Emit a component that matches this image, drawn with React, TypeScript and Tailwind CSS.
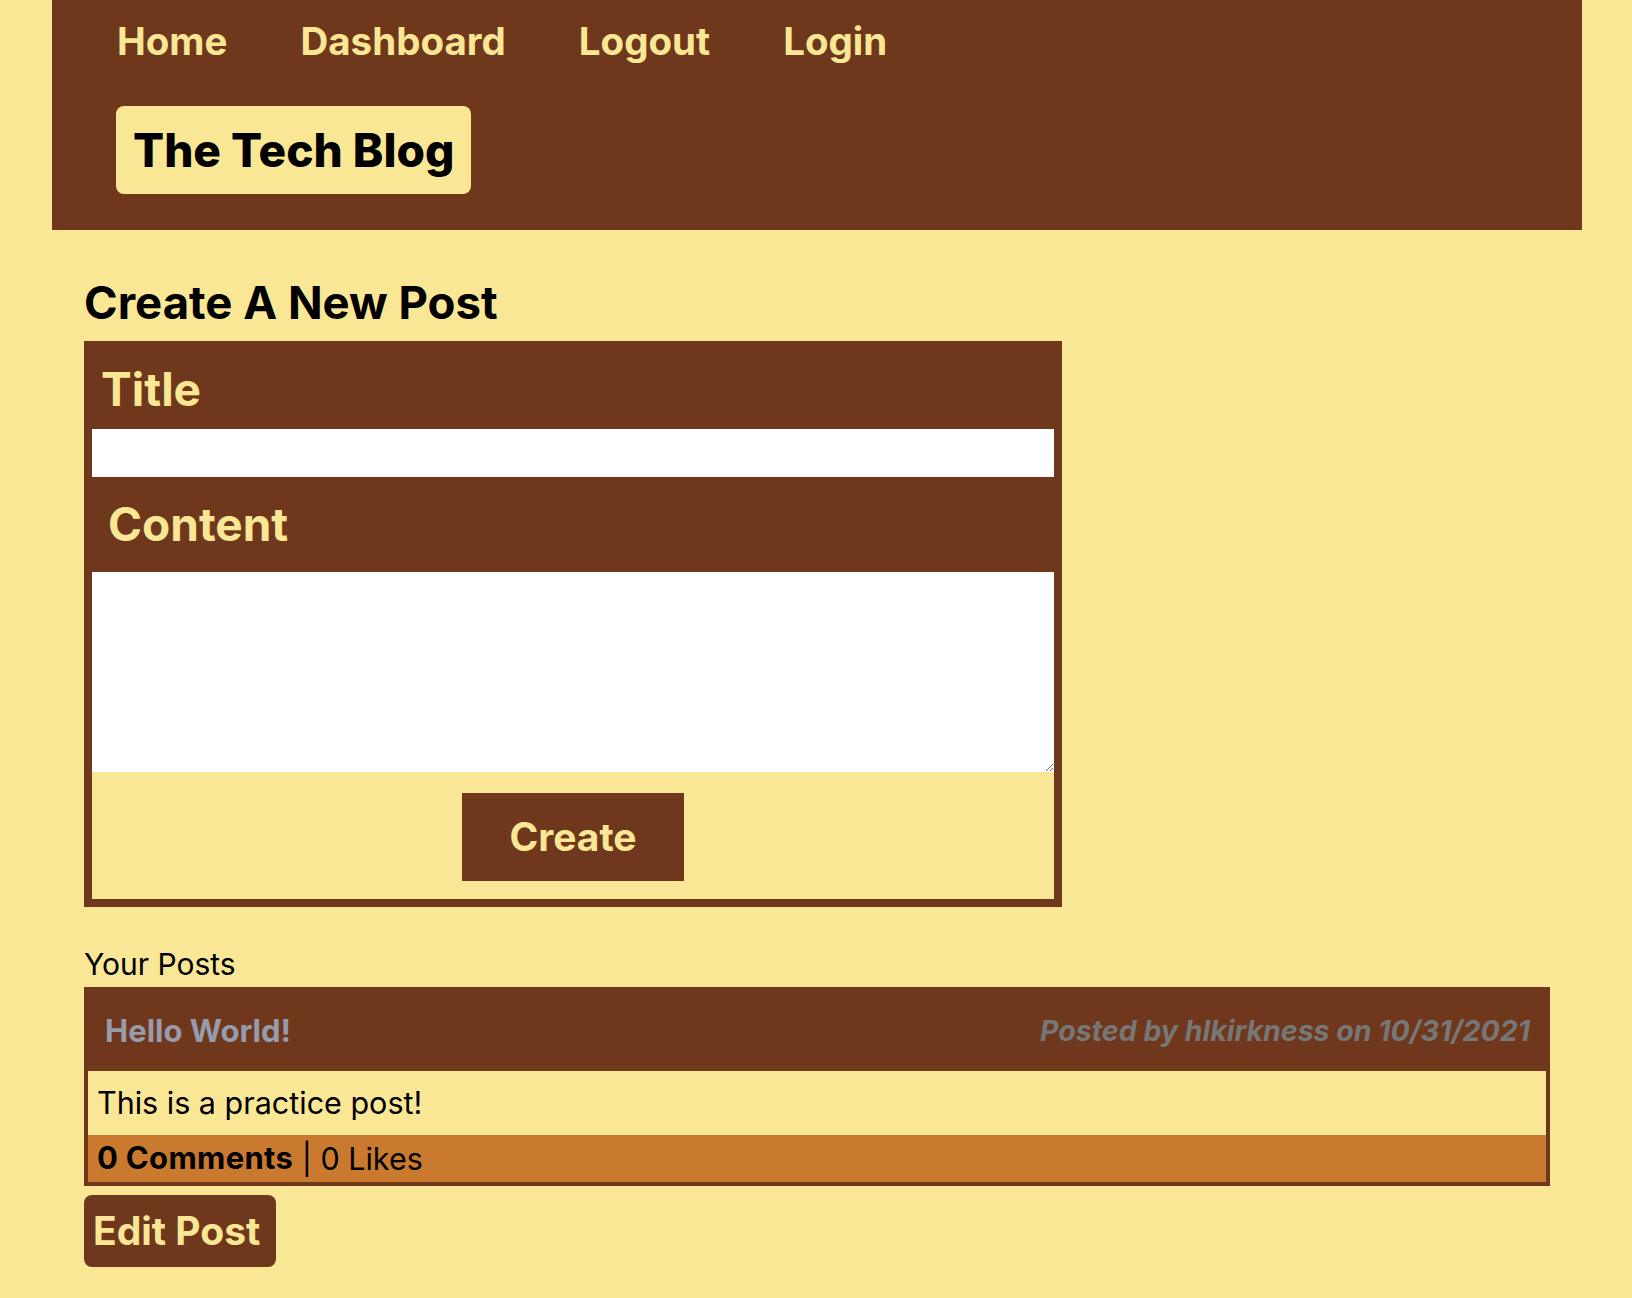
import React from "react";

const font = { fontFamily: "Inter, 'Noto Sans', sans-serif" };

export default function App() {
  return (
    <div className="min-h-[1298px] bg-[#f9e795] text-black" style={font}>
      <header className="ml-[52px] mr-[50px] bg-[#6f381c] pb-[36px]">
        <nav className="flex h-[84px] items-center gap-[73px] pl-[65px]">
          {["Home", "Dashboard", "Logout", "Login"].map((t) => (
            <a key={t} className="text-[38.5px] font-bold text-[#f9e795]">
              {t}
            </a>
          ))}
        </nav>
        <div className="ml-[64px] mt-[22px] inline-flex h-[88px] items-center rounded-lg bg-[#f9e795] pl-[17px] pr-[17px]">
          <h1 className="text-[46px] font-extrabold text-black">The Tech Blog</h1>
        </div>
      </header>

      <main className="pl-[84px] pr-[82px]">
        <h2 className="mt-[46px] mb-[11px] text-[45.5px] font-bold leading-[54px]">
          Create A New Post
        </h2>
        <form className="flex w-[978px] flex-col border-8 border-[#6f381c] bg-[#f9e795]">
          <label className="flex h-[80px] items-center bg-[#6f381c] pl-[9px] text-[46px] font-bold text-[#f9e795]">
            Title
          </label>
          <input className="h-[48px] w-full bg-white outline-none" />
          <label className="flex h-[95px] items-center bg-[#6f381c] pl-[16px] text-[46px] font-bold text-[#f9e795]">
            Content
          </label>
          <textarea className="block h-[200px] w-full bg-white outline-none" />
          <div className="flex justify-center pt-[21px] pb-[18px]">
            <button
              type="button"
              className="flex h-[88px] w-[222px] items-center justify-center bg-[#6f381c] text-[39px] font-bold text-[#f9e795]"
            >
              Create
            </button>
          </div>
        </form>

        <p className="mt-[39px] mb-[5px] text-[30px] leading-[36px]">Your Posts</p>
        <div className="border-4 border-[#6f381c]">
          <div className="flex h-[80px] items-center justify-between bg-[#6f381c] pl-[17px] pr-[16px]">
            <span className="text-[31px] font-bold text-[#979cac]">Hello World!</span>
            <span className="text-[28.5px] font-bold italic text-[#777777]">
              Posted by hlkirkness on 10/31/2021
            </span>
          </div>
          <div className="flex h-[64px] items-center bg-[#f9e795] pl-[9px] text-[30.5px]">
            This is a practice post!
          </div>
          <div className="flex h-[47px] items-center bg-[#c97a2e] pl-[9px] text-[31px]">
            <span className="font-bold tracking-[0.01em]">0 Comments</span>
            <span className="whitespace-pre text-[30.5px]"> | 0 Likes</span>
          </div>
        </div>
        <button
          type="button"
          className="mt-[9px] flex h-[72px] w-[192px] items-center rounded-lg bg-[#6f381c] pl-[9px] text-[39px] font-bold text-[#f9e795]"
        >
          Edit Post
        </button>
      </main>
    </div>
  );
}
